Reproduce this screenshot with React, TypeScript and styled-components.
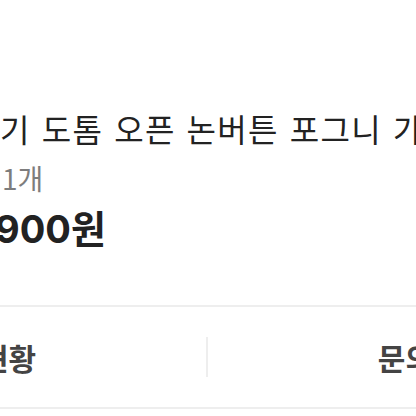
import React from "react";
import styled, { createGlobalStyle } from "styled-components";

const GlobalStyle = createGlobalStyle`
  html, body {
    margin: 0;
    padding: 0;
    background: #ffffff;
    overflow: hidden;
  }
`;

const Screen = styled.div`
  width: 416px;
  height: 416px;
  overflow: hidden;
  background: #ffffff;
  font-family: "Noto Sans CJK KR", "Noto Sans", sans-serif;
`;

const Info = styled.div`
  display: flex;
  flex-direction: column;
  padding-top: 108px;
  height: 305px;
  box-sizing: border-box;
`;

const Title = styled.div`
  font-size: 32px;
  line-height: 40px;
  color: #222222;
  white-space: nowrap;
  letter-spacing: 1.3px;
  word-spacing: 2.5px;
`;

const Quantity = styled.div`
  margin-top: 13px;
  margin-left: 2px;
  font-size: 28px;
  line-height: 34px;
  color: #7d7d7d;
`;

const Price = styled.div`
  margin-top: 12px;
  margin-left: -5px;
  font-family: Inter, "Noto Sans CJK KR", sans-serif;
  font-size: 38px;
  line-height: 44px;
  font-weight: 700;
  color: #222222;
  white-space: nowrap;
`;

const Tabs = styled.div`
  display: flex;
  align-items: center;
  width: 902px;
  height: 104px;
  margin-left: -244px;
  border-top: 2px solid #eeeeee;
  border-bottom: 2px solid #eeeeee;
  box-sizing: border-box;
`;

const Tab = styled.div`
  flex: 1;
  text-align: center;
  font-size: 30px;
  font-weight: 700;
  color: #444444;
`;

const TabDivider = styled.div`
  width: 2px;
  height: 40px;
  background: #eeeeee;
`;

export default function App() {
  return (
    <Screen>
      <GlobalStyle />
      <Info>
        <Title>기 도톰 오픈 논버튼 포그니 가디건</Title>
        <Quantity>1개</Quantity>
        <Price>900원</Price>
      </Info>
      <Tabs>
        <Tab>거래현황</Tab>
        <TabDivider />
        <Tab>문의하기</Tab>
      </Tabs>
    </Screen>
  );
}
